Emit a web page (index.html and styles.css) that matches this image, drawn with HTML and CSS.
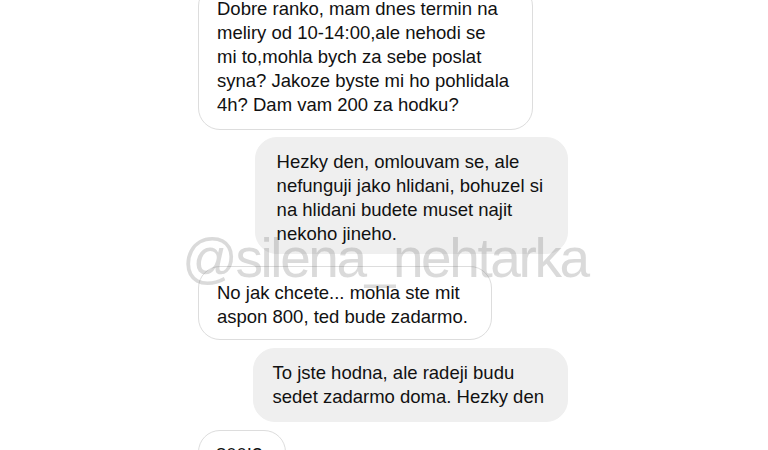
FILE: index.html
```html
<!DOCTYPE html>
<html lang="cs">
<head>
<meta charset="utf-8">
<title>Chat</title>
<link rel="stylesheet" href="styles.css">
</head>
<body>
<main class="chat">
  <div class="msg in m1">Dobre ranko, mam dnes termin na<br>meliry od 10-14:00,ale nehodi se<br>mi to,mohla bych za sebe poslat<br>syna? Jakoze byste mi ho pohlidala<br>4h? Dam vam 200 za hodku?</div>
  <div class="msg out m2">Hezky den, omlouvam se, ale<br>nefunguji jako hlidani, bohuzel si<br>na hlidani budete muset najit<br>nekoho jineho.</div>
  <div class="msg in m3">No jak chcete... mohla ste mit<br>aspon 800, ted bude zadarmo.</div>
  <div class="msg out m4">To jste hodna, ale radeji budu<br>sedet zadarmo doma. Hezky den</div>
  <div class="msg in m5">800!?</div>
</main>
<div class="watermark">@silena_nehtarka</div>
</body>
</html>
```
FILE: styles.css
```css
html, body {
  margin: 0;
  padding: 0;
  background: #ffffff;
  overflow: hidden;
  height: 450px;
}

body {
  font-family: "Liberation Sans", Arial, sans-serif;
  color: #111111;
  position: relative;
}

.chat {
  width: 370px;
  margin: -16px 0 0 198px;
  display: flex;
  flex-direction: column;
  gap: 8px;
}

.msg {
  font-size: 18.5px;
  line-height: 24px;
  padding: 12px 23px 12px 18px;
  border-radius: 22px;
  white-space: nowrap;
}

.in {
  align-self: flex-start;
  background: #ffffff;
  border: 1px solid #dddddd;
}

.out {
  align-self: flex-end;
  background: #efefef;
  border: 1px solid #efefef;
  padding-left: 19px;
}

.m2 {
  margin-top: -1px;
  padding-left: 21px;
  padding-right: 24px;
  padding-bottom: 7px;
}

.m3 {
  margin-top: 4px;
  padding-top: 14px;
  padding-bottom: 10px;
}

.m4 {
  margin-top: 0;
}

.m5 {
  padding-left: 17px;
}

.watermark {
  position: absolute;
  left: 182px;
  top: 225px;
  font-family: "Liberation Sans", Arial, sans-serif;
  font-size: 55px;
  line-height: 66px;
  letter-spacing: -2.4px;
  color: rgba(100, 100, 100, 0.24);
  white-space: nowrap;
  pointer-events: none;
}
```
